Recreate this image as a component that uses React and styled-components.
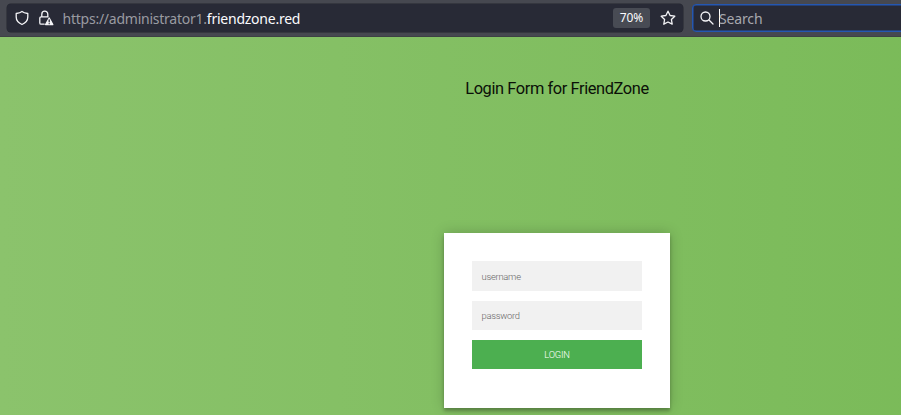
import React from "react";
import styled, { createGlobalStyle } from "styled-components";

const GlobalStyle = createGlobalStyle`
  * { box-sizing: border-box; }
  body { margin: 0; overflow: hidden; }
`;

const Window = styled.div`
  display: flex;
  flex-direction: column;
  width: 901px;
  height: 415px;
  overflow: hidden;
`;

const Toolbar = styled.header`
  display: flex;
  flex: none;
  height: 37px;
  padding: 4px 0 5px 7px;
  gap: 9px;
  background: #464850;
  border-bottom: 1px solid #3d4044;
  font-family: "Noto Sans", sans-serif;
  color: #fbfbfe;
`;

const AddressBar = styled.div`
  display: flex;
  align-items: center;
  flex: none;
  width: 676px;
  height: 28px;
  padding: 0 7px 0 6.5px;
  border-radius: 4px;
  background: #282a36;
  box-shadow: 0 0 0 0.5px #24262f;
`;

const Icon = styled.svg`
  display: block;
  flex: none;
  width: 16px;
  height: 16px;
  margin-left: ${(p) => p.$gap || 0}px;
  fill: none;
  stroke: #f4f4f7;
  stroke-width: 1.3;
  stroke-linecap: round;
  stroke-linejoin: round;
`;

const Address = styled.div`
  flex: 1;
  margin-left: 8.5px;
  padding-top: 1px;
  font-size: 14px;
  line-height: 20px;
  letter-spacing: -0.24px;
  color: #9a9ba1;
  white-space: nowrap;
`;

const Domain = styled.span`
  color: #fbfbfe;
`;

const Zoom = styled.div`
  width: 37px;
  height: 20px;
  margin-right: 10px;
  border-radius: 3px;
  background: #484b54;
  font-size: 12px;
  line-height: 20px;
  text-align: center;
`;

const SearchBar = styled.div`
  display: flex;
  align-items: center;
  flex: none;
  width: 230px;
  height: 28px;
  padding-left: 5.5px;
  border: 1px solid #2457b2;
  border-radius: 4px;
  background: #282a36;
  box-shadow: inset 0 0 0 0.5px #2457b2;
`;

const Caret = styled.span`
  width: 1px;
  height: 18px;
  margin-left: 4.5px;
  background: #fff;
`;

const SearchHint = styled.span`
  margin-left: -1px;
  padding-top: 1px;
  font-size: 14px;
  line-height: 20px;
  letter-spacing: -0.15px;
  color: #a7a8ae;
`;

const Page = styled.main`
  display: flex;
  flex: 1;
  flex-direction: column;
  align-items: center;
  width: 1114px;
  background: linear-gradient(to left, #77b955, #8bc36c);
  font-family: Roboto, sans-serif;
`;

const Title = styled.h1`
  margin: 42px 0 0;
  font-size: 16.4px;
  font-weight: 400;
  line-height: 20px;
  letter-spacing: -0.4px;
  color: #0b1008;
`;

const LoginCard = styled.form`
  display: flex;
  flex-direction: column;
  gap: 9.6px;
  width: 226.8px;
  height: 175px;
  margin-top: 134px;
  padding: 28.4px;
  background: #fff;
  box-shadow: 0 0 12.6px rgba(0, 0, 0, 0.2), 0 3.15px 3.15px rgba(0, 0, 0, 0.24);
`;

const Field = styled.input`
  display: block;
  width: 100%;
  height: 29.6px;
  padding: 0 9.5px;
  border: 0;
  border-radius: 0;
  outline: 0;
  background: #f1f1f1;
  font: 300 9.4px Roboto, sans-serif;
  letter-spacing: -0.25px;
  &::placeholder { color: #666; opacity: 1; }
`;

const LoginButton = styled.button`
  width: 100%;
  height: 29.4px;
  padding: 0;
  border: 0;
  background: #4caf50;
  color: #fff;
  font: 300 9.4px Roboto, sans-serif;
  letter-spacing: -0.25px;
`;

function Shield() {
  return (
    <Icon viewBox="0 0 16 16">
      <path d="M8 1.5C6.6 2.7 4.8 3.2 2.2 3.5v3.6c0 3.5 2.4 6 5.8 7.4 3.4-1.4 5.8-3.9 5.8-7.4V3.5C11.2 3.2 9.4 2.7 8 1.5Z" />
    </Icon>
  );
}

function LockWarning() {
  return (
    <Icon viewBox="0 0 16 16" $gap={8.5}>
      <path d="M3.8 6.8V4.2a3 3 0 0 1 6 0v2.6M6.2 14.2H3.1a1.3 1.3 0 0 1-1.3-1.3V8.1c0-.7.6-1.3 1.3-1.3h7" />
      <path d="m11.2 8 3.6 6.6H7.6Z" fill="#f4f4f7" />
      <path d="M11.2 9.8v2M11.2 13.6v.1" stroke="#282a36" />
    </Icon>
  );
}

function Star() {
  return (
    <Icon viewBox="0 0 16 16">
      <path d="m8 1.2 2.1 4.3 4.7.7-3.4 3.3.8 4.7L8 12l-4.2 2.2.8-4.7-3.4-3.3 4.7-.7Z" />
    </Icon>
  );
}

function Magnifier() {
  return (
    <Icon viewBox="0 0 16 16">
      <circle cx="6.5" cy="6.5" r="4.5" />
      <path d="m10 10 4 4" />
    </Icon>
  );
}

export default function App() {
  return (
    <Window>
      <GlobalStyle />
      <Toolbar>
        <AddressBar>
          <Shield />
          <LockWarning />
          <Address>
            https://administrator1.<Domain>friendzone.red</Domain>
          </Address>
          <Zoom>70%</Zoom>
          <Star />
        </AddressBar>
        <SearchBar>
          <Magnifier />
          <Caret />
          <SearchHint>Search</SearchHint>
        </SearchBar>
      </Toolbar>
      <Page>
        <Title>Login Form for FriendZone</Title>
        <LoginCard>
          <Field placeholder="username" />
          <Field placeholder="password" type="password" />
          <LoginButton type="button">LOGIN</LoginButton>
        </LoginCard>
      </Page>
    </Window>
  );
}
